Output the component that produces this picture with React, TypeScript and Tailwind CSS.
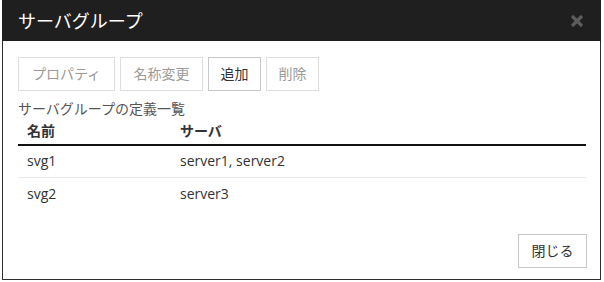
import React from 'react'

const font = { fontFamily: '"Open Sans", "Noto Sans CJK JP", sans-serif' }

const actions = [
  { label: 'プロパティ', enabled: false, w: 'w-[97px]' },
  { label: '名称変更', enabled: false, w: 'w-[83px]' },
  { label: '追加', enabled: true, w: 'w-[53px]' },
  { label: '削除', enabled: false, w: 'w-[53px]' },
]

const groups = [
  { name: 'svg1', servers: 'server1, server2' },
  { name: 'svg2', servers: 'server3' },
]

export default function App() {
  return (
    <div className="w-[604px] h-[282px] bg-white" style={font}>
      <div className="ml-[2px] w-[599px] h-[280px] border border-t-0 border-[#2e2e2e] flex flex-col">
        {/* Header */}
        <div className="h-[41px] bg-[#1f1f1f] flex items-center justify-between pl-[16px] pr-[16px] -mx-px">
          <span className="text-white text-[18px] leading-none">サーバグループ</span>
          <svg width="14" height="14" viewBox="0 0 14 14" className="mr-[1px]">
            <path d="M2 2 L12 12 M12 2 L2 12" stroke="#5c5c5c" strokeWidth="3.2" strokeLinecap="butt" />
          </svg>
        </div>

        {/* Body */}
        <div className="flex-1 flex flex-col px-[15px] pt-[16px] pb-[11px]">
          <div className="flex gap-[5px]">
            {actions.map((a) => (
              <button
                key={a.label}
                className={`h-[34px] ${a.w} text-[14px] leading-none border bg-white ${
                  a.enabled ? 'border-[#c8c8c8] text-[#333]' : 'border-[#dedede] text-[#9a9a9a]'
                }`}
              >
                {a.label}
              </button>
            ))}
          </div>

          <div className="mt-[9px] text-[14px] leading-[18px] text-[#555]">サーバグループの定義一覧</div>

          <div className="w-[568px]">
            <div className="flex h-[28px] items-center pb-[2px] border-b-2 border-[#111] text-[14px] font-bold text-[#333]">
              <div className="w-[162px] pl-[9px]">名前</div>
              <div>サーバ</div>
            </div>
            {groups.map((g, i) => (
              <div
                key={g.name}
                className={`flex h-[32px] items-center pb-[2px] text-[14px] text-[#333] ${
                  i < groups.length - 1 ? 'border-b border-[#e8e8e8]' : ''
                }`}
              >
                <div className="w-[162px] pl-[9px]">{g.name}</div>
                <div>{g.servers}</div>
              </div>
            ))}
          </div>

          <div className="mt-auto flex justify-end w-[569px]">
            <button className="h-[34px] w-[69px] text-[14px] leading-none border border-[#c8c8c8] text-[#333] bg-white">
              閉じる
            </button>
          </div>
        </div>
      </div>
    </div>
  )
}
